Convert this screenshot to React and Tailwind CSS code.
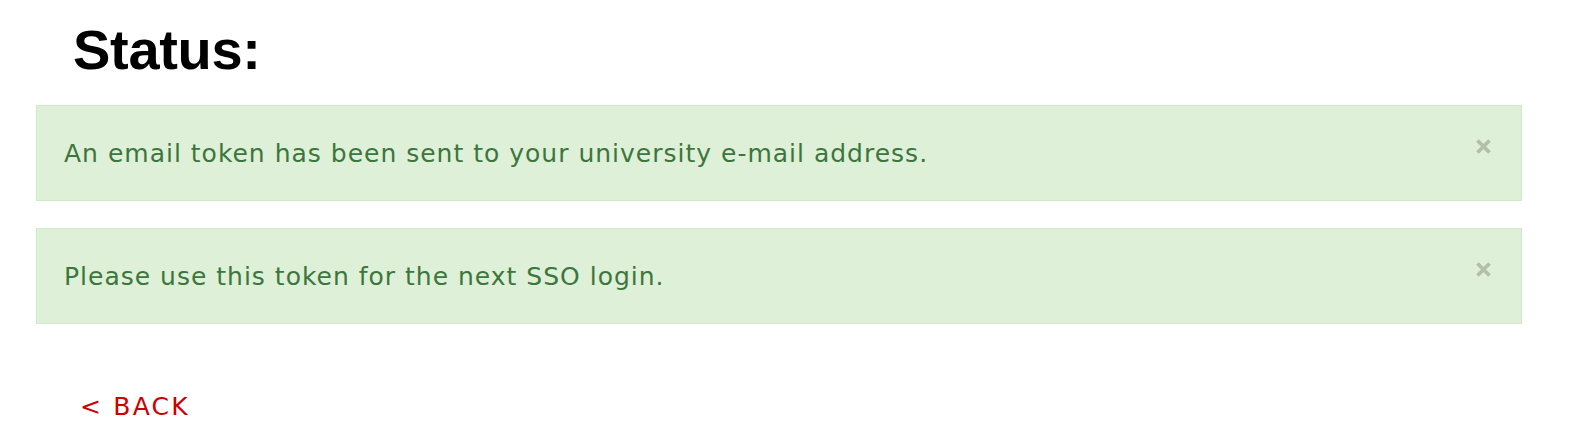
function CloseX() {
  return (
    <svg width="17" height="17" viewBox="0 0 17 17" className="text-black opacity-20 shrink-0" aria-hidden="true">
      <path d="M2.5 2.5 L14.5 14.5 M14.5 2.5 L2.5 14.5" stroke="currentColor" strokeWidth="3.8" strokeLinecap="butt" fill="none" />
    </svg>
  );
}

export default function App() {
  const body = { fontFamily: '"DejaVu Sans", "Open Sans", sans-serif' };
  const head = { fontFamily: '"Liberation Sans", Arial, sans-serif' };
  return (
    <div className="bg-white w-[1590px] h-[448px] overflow-hidden" style={body}>
      <div className="pl-[36px] w-[1522px]">
        <h1
          className="pl-[37px] pt-[19px] mb-[24px] text-[56px] leading-[62px] font-bold text-black tracking-[-0.3px]"
          style={head}
        >
          Status:
        </h1>
        <div className="flex flex-col gap-[27px]">
          {[
            "An email token has been sent to your university e-mail address.",
            "Please use this token for the next SSO login.",
          ].map((t) => (
            <div
              key={t}
              className="flex items-start justify-between h-[96px] bg-[#dff0d8] border border-[#d0e9c6] pl-[27px] pr-[29px] pt-[34px] text-[#3c763d] text-[25px] leading-[28px] tracking-[1px]"
            >
              <span>{t}</span>
              <span className="mt-[-2px]">
                <CloseX />
              </span>
            </div>
          ))}
        </div>
        <div className="pl-[44px] pt-[69px]">
          <a className="text-[#cc0000] text-[25px] tracking-[2.2px] leading-[28px] cursor-pointer">&lt; BACK</a>
        </div>
      </div>
    </div>
  );
}
